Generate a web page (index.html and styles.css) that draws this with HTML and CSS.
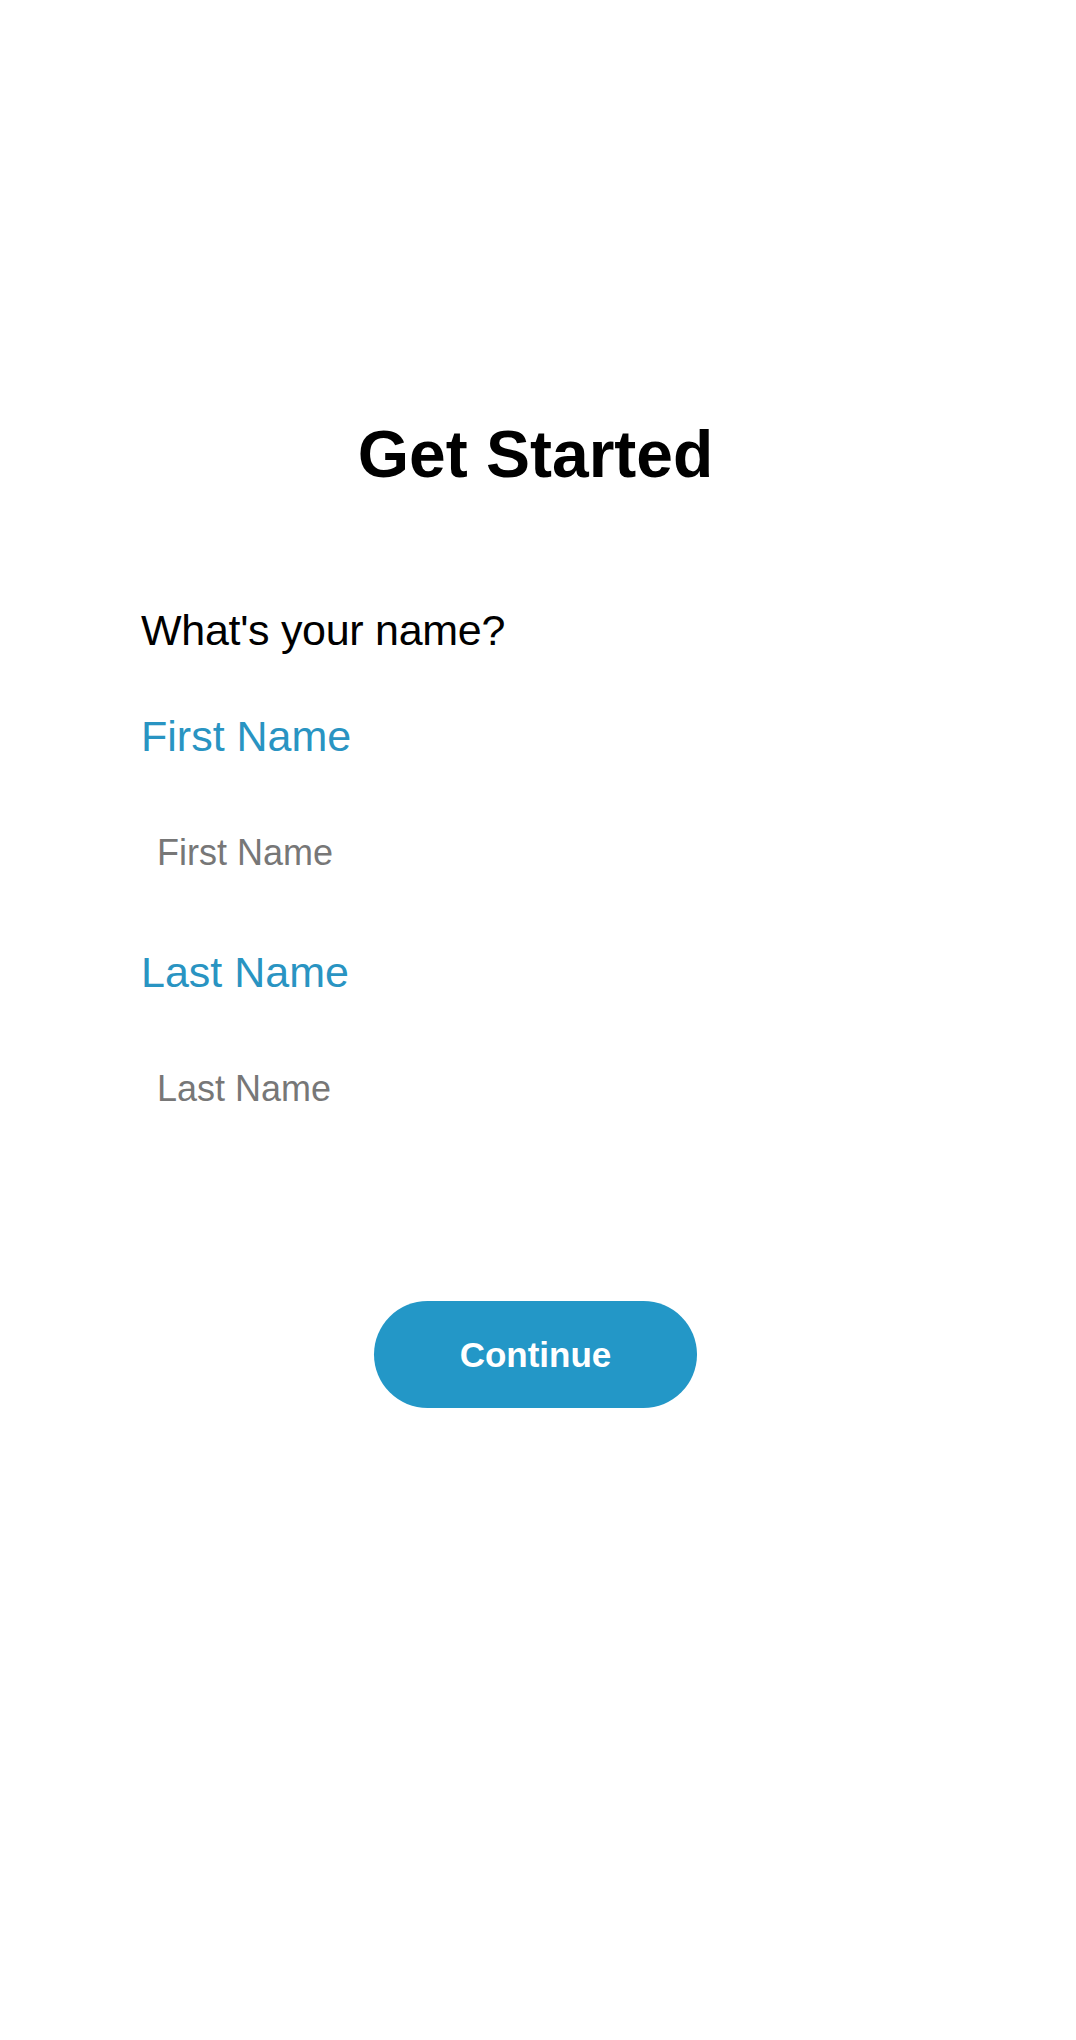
FILE: index.html
```html
<!DOCTYPE html>
<html lang="en">
<head>
<meta charset="utf-8">
<title>Get Started</title>
<link rel="stylesheet" href="styles.css">
</head>
<body>
<main class="page">
  <h1 class="title">Get Started</h1>
  <form class="form">
    <p class="question">What's your name?</p>
    <div class="field">
      <label class="label" for="first">First Name</label>
      <input class="input" id="first" type="text" placeholder="First Name">
    </div>
    <div class="field">
      <label class="label" for="last">Last Name</label>
      <input class="input" id="last" type="text" placeholder="Last Name">
    </div>
    <div class="actions">
      <button class="button" type="button">Continue</button>
    </div>
  </form>
</main>
</body>
</html>
```

FILE: styles.css
```css
html, body {
  margin: 0;
  padding: 0;
  background: #ffffff;
}

body {
  font-family: "Liberation Sans", Arial, sans-serif;
  color: #000000;
}

.page {
  min-height: 2040px;
  padding-top: 414px;
  box-sizing: border-box;
}

.title {
  margin: 0;
  font-size: 66px;
  line-height: 80px;
  font-weight: 700;
  text-align: center;
  padding-right: 5px;
}

.form {
  display: flex;
  flex-direction: column;
  padding-left: 141px;
  padding-right: 141px;
  margin-top: 110px;
}

.question {
  margin: 0;
  font-size: 43px;
  line-height: 52px;
  font-weight: 400;
  letter-spacing: -0.3px;
}

.field {
  display: flex;
  flex-direction: column;
  gap: 56px;
  margin-top: 54px;
}

.field + .field {
  margin-top: 58px;
}

.label {
  font-size: 43px;
  line-height: 52px;
  color: #2994c2;
}

.input {
  height: 70px;
  border: none;
  outline: none;
  padding: 0 0 0 16px;
  margin: 0;
  font-family: "Liberation Sans", Arial, sans-serif;
  font-size: 36px;
  color: #000000;
  background: transparent;
  box-sizing: border-box;
}

.input::placeholder {
  color: #777777;
  opacity: 1;
}

.actions {
  display: flex;
  justify-content: center;
  margin-top: 177px;
  margin-left: -141px;
  margin-right: -141px;
  padding-right: 5px;
}

.button {
  width: 323px;
  height: 107px;
  border: none;
  border-radius: 54px;
  background: #2397c7;
  color: #ffffff;
  font-family: "Liberation Sans", Arial, sans-serif;
  font-size: 35px;
  font-weight: 700;
  padding: 0;
  cursor: pointer;
}
```
